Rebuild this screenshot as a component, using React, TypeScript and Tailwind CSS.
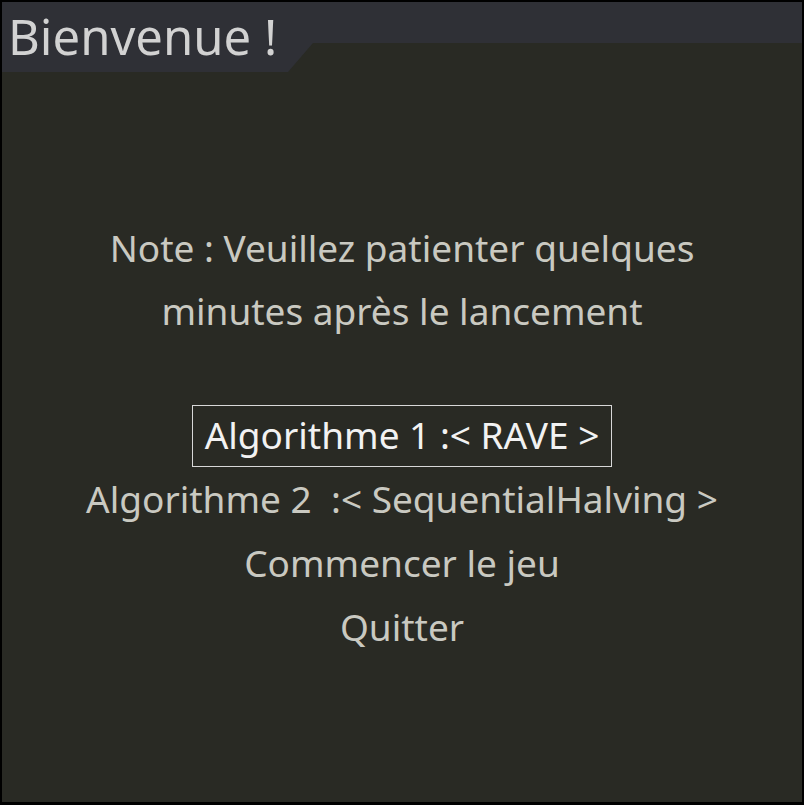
import React from "react";

const items = [
  { label: "Algorithme 1 :< RAVE >", active: true },
  { label: "Algorithme 2  :< SequentialHalving >", active: false },
  { label: "Commencer le jeu", active: false },
  { label: "Quitter", active: false },
];

export default function App() {
  return (
    <div className="w-[804px] h-[805px] bg-black p-[2px] pb-[3px] font-['Noto_Sans',sans-serif]">
      <div className="relative h-full w-full bg-[#292a24] flex flex-col">
        {/* Title bar */}
        <div className="relative h-[41px] bg-[#2f3036] shrink-0">
          <div className="absolute left-0 top-0 w-[311px] h-[70px] bg-[#2f3036] [clip-path:polygon(0_0,100%_0,100%_41px,286px_100%,0_100%)]">
            <h1 className="pl-[6px] pt-[2px] text-[49px] leading-[64px] text-[#d2d2d2] whitespace-pre">
              Bienvenue !
            </h1>
          </div>
        </div>

        {/* Body */}
        <div className="flex flex-col items-center pt-[173px] text-[37px] leading-[63px] text-[#c9c9c1]">
          <p>Note : Veuillez patienter quelques</p>
          <p>minutes après le lancement</p>

          <div className="mt-[63px] flex flex-col items-center">
            {items.map((it) => (
              <div
                key={it.label}
                className={
                  it.active
                    ? "h-[62px] leading-[58px] border border-[#d8d8d8] px-[12px] text-[#f2f2f2] whitespace-pre"
                    : "h-[64px] leading-[64px] whitespace-pre"
                }
              >
                {it.label}
              </div>
            ))}
          </div>
        </div>
      </div>
    </div>
  );
}
